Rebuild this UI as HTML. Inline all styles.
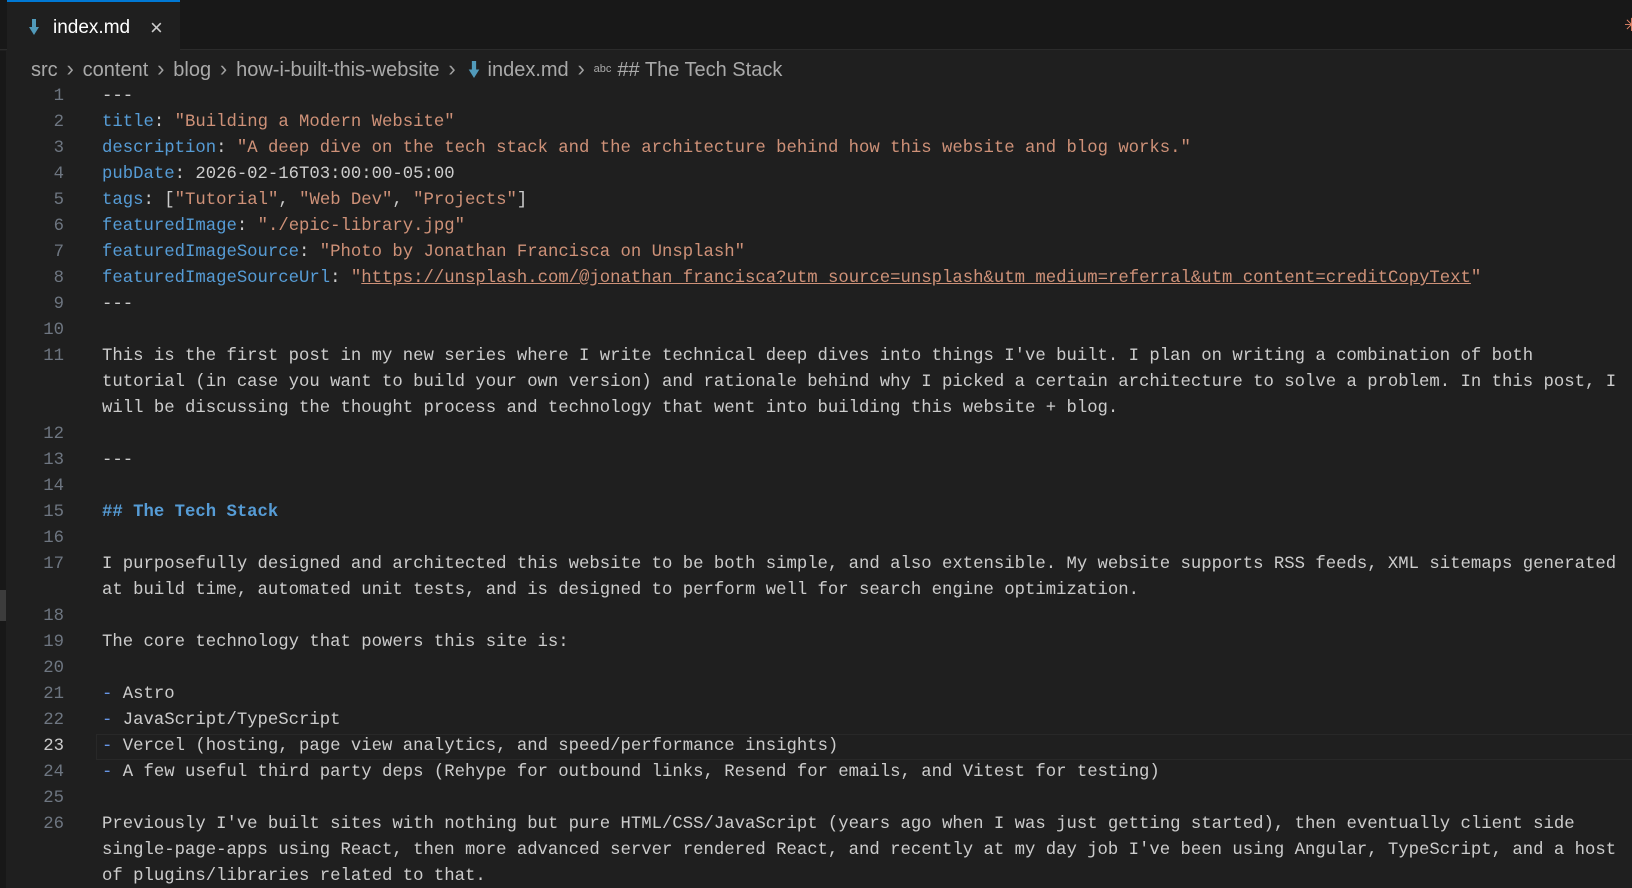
<!DOCTYPE html>
<html><head><meta charset="utf-8"><style>
html,body{margin:0;padding:0;width:1632px;height:888px;overflow:hidden;background:#1f1f1f;}
body{position:relative;font-family:"Liberation Sans",sans-serif;}
.tabbar{position:absolute;left:0;top:0;width:1632px;height:50px;background:#181818;border-bottom:1px solid #2b2b2b;box-sizing:border-box;}
.tab{position:absolute;left:7px;top:0;width:173px;height:51px;background:#1f1f1f;border-top:2px solid #0078d4;box-sizing:border-box;}
.tab .t{position:absolute;left:46px;top:15px;font-size:19px;color:#ffffff;}
.tab .x{position:absolute;left:143px;top:13px;font-size:22px;color:#cccccc;}
.arrow{position:absolute;width:10px;height:16px;}
.bc{position:absolute;left:31px;top:56px;font-size:20px;color:#a9a9a9;white-space:nowrap;}
.bc .sep{display:inline-block;width:25px;text-align:center;color:#a0a0a0;font-size:22px;}
.abc{font-size:11px;vertical-align:4px;margin-right:6px;}
.left{position:absolute;left:0;top:51px;width:6px;height:837px;background:#181818;}
.lbar{position:absolute;left:0;top:590px;width:6px;height:31px;background:#3c3c3c;}
pre{margin:0;position:absolute;top:84px;font-family:"Liberation Mono",monospace;font-size:17.3px;line-height:26px;}
.nums{left:0;width:64px;text-align:right;color:#6e7681;}
.code{left:102px;color:#cccccc;}
.k{color:#569cd6}.s{color:#ce9178}.u{color:#ce9178;text-decoration:underline}.h{color:#569cd6;font-weight:bold}.d{color:#6796e6}
.cur{position:absolute;left:96px;top:734px;width:1536px;height:24px;border:1px solid #282828;border-right:none;}
.spark{position:absolute;left:1624px;top:18px;width:14px;height:14px;color:#e8876a;font-size:18px;line-height:14px;}
</style></head><body>
<div class="tabbar"></div>
<div class="tab">
<svg class="arrow" style="left:22px;top:17px" viewBox="0 0 10 16"><path d="M3 0h4v8h3L5 16 0 8h3z" fill="#519aba"/></svg>
<span class="t">index.md</span><span class="x">×</span></div>
<div class="spark">✳</div>
<div class="bc">src<span class="sep">›</span>content<span class="sep">›</span>blog<span class="sep">›</span>how-i-built-this-website<span class="sep">›</span><svg width="12" height="17" viewBox="0 0 10 16" style="vertical-align:-2px;margin:0 8px 0 3px"><path d="M3 0h4v8h3L5 16 0 8h3z" fill="#519aba"/></svg>index.md<span class="sep">›</span><span class="abc">abc</span>## The Tech Stack</div>
<div class="left"></div><div class="lbar"></div>
<div class="cur"></div>
<pre class="nums">1
2
3
4
5
6
7
8
9
10
11


12
13
14
15
16
17

18
19
20
21
22
<span style="color:#cccccc">23</span>
24
25
26</pre>
<pre class="code">---
<span class="k">title</span>: <span class="s">"Building a Modern Website"</span>
<span class="k">description</span>: <span class="s">"A deep dive on the tech stack and the architecture behind how this website and blog works."</span>
<span class="k">pubDate</span>: 2026-02-16T03:00:00-05:00
<span class="k">tags</span>: [<span class="s">"Tutorial"</span>, <span class="s">"Web Dev"</span>, <span class="s">"Projects"</span>]
<span class="k">featuredImage</span>: <span class="s">"./epic-library.jpg"</span>
<span class="k">featuredImageSource</span>: <span class="s">"Photo by Jonathan Francisca on Unsplash"</span>
<span class="k">featuredImageSourceUrl</span>: <span class="s">"</span><span class="u">https://unsplash.com/@jonathan_francisca?utm_source=unsplash&amp;utm_medium=referral&amp;utm_content=creditCopyText</span><span class="s">"</span>
---

This is the first post in my new series where I write technical deep dives into things I've built. I plan on writing a combination of both
tutorial (in case you want to build your own version) and rationale behind why I picked a certain architecture to solve a problem. In this post, I
will be discussing the thought process and technology that went into building this website + blog.

---

<span class="h">## The Tech Stack</span>

I purposefully designed and architected this website to be both simple, and also extensible. My website supports RSS feeds, XML sitemaps generated
at build time, automated unit tests, and is designed to perform well for search engine optimization.

The core technology that powers this site is:

<span class="d">-</span> Astro
<span class="d">-</span> JavaScript/TypeScript
<span class="d">-</span> Vercel (hosting, page view analytics, and speed/performance insights)
<span class="d">-</span> A few useful third party deps (Rehype for outbound links, Resend for emails, and Vitest for testing)

Previously I've built sites with nothing but pure HTML/CSS/JavaScript (years ago when I was just getting started), then eventually client side
single-page-apps using React, then more advanced server rendered React, and recently at my day job I've been using Angular, TypeScript, and a host
of plugins/libraries related to that.</pre>
</body></html>
